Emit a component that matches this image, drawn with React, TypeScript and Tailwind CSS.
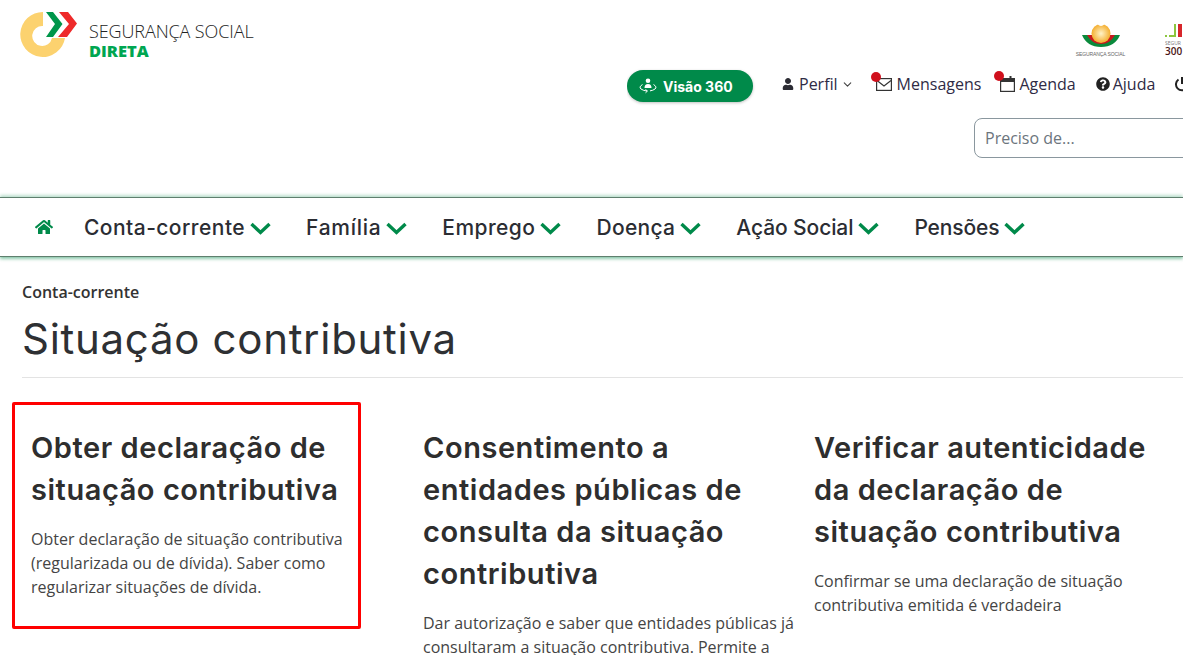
import { ChevronDown } from 'lucide-react'
import { FaUser, FaQuestionCircle, FaHome } from 'react-icons/fa'

const HEADING = "font-['Inter','Noto_Sans',sans-serif]"

const NAV_ITEMS = [
  { label: 'Conta-corrente', tracking: 'tracking-[0.45px]' },
  { label: 'Família', tracking: 'tracking-[0.7px]' },
  { label: 'Emprego', tracking: 'tracking-[0.45px]' },
  { label: 'Doença', tracking: 'tracking-[0.3px]' },
  { label: 'Ação Social', tracking: 'tracking-[-0.1px]' },
  { label: 'Pensões', tracking: 'tracking-[-0.12px]' },
]

function Logo() {
  return (
    <div className="flex items-start">
      <svg width="60" height="48" viewBox="20 10 60 48" className="shrink-0">
        <path d="M43 12 A22.5 22.5 0 1 0 65 38 L52 38 A10 10 0 1 1 43 26 Z" fill="#fcd26f" />
        <path d="M46 12 H53 L62.5 24 L53 37 H46 L55 24 Z" fill="#00964a" />
        <path d="M59 12 H68 L77 23.5 L67 37 H58 L69 24 Z" fill="#ee2a2a" />
      </svg>
      <div className="ml-[9px] mt-[11px] font-['Open_Sans',sans-serif]">
        <div className="text-[18px] leading-[20px] font-light tracking-[-0.1px] text-[#222]">SEGURANÇA SOCIAL</div>
        <div className="text-[16.5px] leading-[20px] font-extrabold text-[#00a651]">DIRETA</div>
      </div>
    </div>
  )
}

function PartnerLogos() {
  return (
    <div className="flex h-[70px] items-start justify-end pt-[24px]">
      <div className="flex w-[47px] shrink-0 flex-col items-center">
        <svg width="38" height="23" viewBox="0 0 38 23">
          <defs>
            <radialGradient id="sun">
              <stop offset="0" stopColor="#fff3c8" />
              <stop offset="1" stopColor="#f4ae2f" />
            </radialGradient>
          </defs>
          <path d="M0 11 H8 Q19 18 30 11 H38 Q33 23 19 23 Q5 23 0 11 Z" fill="#0a8a3c" />
          <path d="M5 11 H33 Q28 20 19 20 Q10 20 5 11 Z" fill="#c8171e" />
          <circle cx="19" cy="9.5" r="9.5" fill="url(#sun)" />
          <path d="M14.5 -1 Q19 5 23.5 -1 Z" fill="#fff" />
        </svg>
        <div className="mt-[4px] whitespace-nowrap font-['Liberation_Sans',sans-serif] text-[5px] leading-[6px] tracking-[-0.1px] text-[#666]">SEGURANÇA SOCIAL</div>
      </div>
      <div className="ml-[41px] w-[18px] shrink-0 overflow-hidden font-['Open_Sans',sans-serif]">
        <svg width="18" height="14" viewBox="0 0 18 14" className="block">
          <path d="M0 11 H2 V13 H0 Z M4 11 H9 V0 H11 V13 H4 Z" fill="#8cc63f" />
          <path d="M13 0 H17 V13 H13 Z" fill="#d7262b" />
        </svg>
        <div className="mt-[2px] whitespace-nowrap text-[5px] leading-[6px] text-[#777]">SEGUR</div>
        <div className="text-[10px] leading-[11px] font-semibold text-[#4a1414]">300</div>
      </div>
    </div>
  )
}

function Visao360Icon() {
  return (
    <svg width="20" height="16" viewBox="0 0 20 16" fill="none" stroke="#fff" strokeWidth="1" className="shrink-0">
      <circle cx="10" cy="2.8" r="2.3" fill="#fff" stroke="none" />
      <path d="M6.5 10 Q6.5 6 10 6 Q13.5 6 13.5 10 Z" fill="#fff" stroke="none" />
      <path d="M4.5 6.5 Q0.5 9 3 11 Q5.5 12.8 9 13" />
      <path d="M7.5 11.5 L9.5 13 L7.5 14.8" />
      <path d="M15.5 6.5 Q19.5 9 17 11 Q15 12.5 12 12.9" />
    </svg>
  )
}

function Badge({ className }: { className: string }) {
  return <span className={`absolute h-[10px] w-[10px] rounded-full bg-[#d0101c] ${className}`} />
}

function TopLinks() {
  return (
    <div className="flex h-[32px] items-center font-['Open_Sans',sans-serif] text-[16px] text-[#2f2b45]">
      <button className="mr-[29px] flex h-[32px] w-[126px] shrink-0 items-center gap-[5px] rounded-[16px] bg-[#008a4a] pl-[11px] font-['Inter',sans-serif] text-[14px] font-bold text-white shadow-[0_1px_3px_rgba(0,0,0,0.25)]">
        <Visao360Icon />
        Visão 360
      </button>
      <div className="-mt-[4px] mr-[22px] flex items-center">
        <FaUser className="mr-[5px] h-[12px] w-[12px] text-[#2b2b33]" />
        Perfil
        <ChevronDown className="ml-[3px] h-[13px] w-[13px] text-[#444]" />
      </div>
      <div className="-mt-[4px] mr-[19px] flex items-center">
        <span className="relative mr-[5px]">
          <svg width="16" height="13" viewBox="0 0 16 13" fill="none" stroke="#333" strokeWidth="1.2" className="block">
            <rect x="0.6" y="0.6" width="14.8" height="11.8" />
            <path d="M1 2.5 L8 8 L15 2.5" />
          </svg>
          <Badge className="-left-[5px] -top-[6px]" />
        </span>
        Mensagens
      </div>
      <div className="-mt-[4px] mr-[20px] flex items-center">
        <span className="relative mr-[4px]">
          <svg width="15" height="16" viewBox="0 0 15 16" fill="none" stroke="#333" strokeWidth="1.2" className="block">
            <rect x="0.6" y="2.6" width="13.8" height="12.8" />
            <path d="M0.6 4.5 H14.4" strokeWidth="3" />
            <path d="M10.5 0 V4" strokeWidth="2" />
          </svg>
          <Badge className="-left-[6px] -top-[5px]" />
        </span>
        Agenda
      </div>
      <div className="-mt-[4px] mr-[19px] flex items-center">
        <FaQuestionCircle className="mr-[3px] h-[14px] w-[14px] text-[#222]" />
        Ajuda
      </div>
      <svg width="16" height="16" viewBox="0 0 16 16" fill="none" stroke="#222" strokeWidth="2" className="-mt-[4px] shrink-0">
        <path d="M4.5 3.5 A6 6 0 1 0 11.5 3.5" />
        <path d="M8 1 V8" />
      </svg>
    </div>
  )
}

function Header() {
  return (
    <header className="flex h-[197px] justify-between pl-[20px] pt-[10px]">
      <Logo />
      <div className="-mt-[10px] w-[556px] shrink-0 overflow-hidden">
        <PartnerLogos />
        <TopLinks />
        <div className="ml-[347px] mt-[16px] flex h-[40px] w-[300px] items-center rounded-[8px] border border-[#8a979e] px-[10px] font-['Open_Sans',sans-serif] text-[16px] text-[#6c757d]">
          Preciso de...
        </div>
      </div>
    </header>
  )
}

function NavChevron() {
  return (
    <svg width="21" height="13" viewBox="0 0 21 13" fill="none" stroke="#008a4a" strokeWidth="3.4" className="ml-[5px] mt-[1px] shrink-0">
      <path d="M1.5 2 L10.5 10.5 L19.5 2" />
    </svg>
  )
}

function MainNav() {
  return (
    <nav className={`flex h-[60px] items-center gap-[35px] border-y border-[#5f7f6e] bg-white pl-[35px] pt-[2px] shadow-[0_-2px_3px_rgba(0,138,74,0.25),0_2px_3px_rgba(0,138,74,0.45)] ${HEADING}`}>
      <FaHome className="-mr-[4px] -mt-[2px] h-[18px] w-[18px] text-[#008a4a]" />
      {NAV_ITEMS.map((item) => (
        <div key={item.label} className={`flex items-center whitespace-nowrap text-[21px] font-medium text-[#2b2d33] ${item.tracking}`}>
          {item.label}
          <NavChevron />
        </div>
      ))}
    </nav>
  )
}

function Card({ title, text, className }: { title: string[]; text: string[]; className?: string }) {
  return (
    <div className={`shrink-0 ${className}`}>
      <h2 className={`text-[29px] leading-[42px] font-semibold tracking-[0.55px] text-[#2e2e2e] ${HEADING}`}>
        {title.map((line) => (
          <div key={line} className="whitespace-nowrap">{line}</div>
        ))}
      </h2>
      <p className="mt-[16px] font-['Open_Sans',sans-serif] text-[16px] leading-[24px] text-[#444]">
        {text.map((line) => (
          <span key={line} className="block whitespace-nowrap">{line}</span>
        ))}
      </p>
    </div>
  )
}

export default function App() {
  return (
    <div className="h-[655px] w-[1183px] overflow-hidden bg-white">
      <Header />
      <MainNav />
      <main className="pl-[22px] pt-[25px]">
        <div className="font-['Open_Sans',sans-serif] text-[16px] leading-[20px] font-semibold text-[#333]">Conta-corrente</div>
        <h1 className={`mt-[13px] pb-[14px] text-[42px] leading-[48px] tracking-[0.7px] text-[#2e3033] ${HEADING}`}>Situação contributiva</h1>
        <div className="h-px bg-[#e3e3e3]" />
        <div className="mt-[24px] flex">
          <Card
            className="-ml-[10px] h-[227px] w-[349px] rounded-[2px] border-[3px] border-[#ff0000] pl-[16px] pt-[22px]"
            title={['Obter declaração de', 'situação contributiva']}
            text={['Obter declaração de situação contributiva', '(regularizada ou de dívida). Saber como', 'regularizar situações de dívida.']}
          />
          <Card
            className="ml-[62px] w-[391px] pt-[25px]"
            title={['Consentimento a', 'entidades públicas de', 'consulta da situação', 'contributiva']}
            text={['Dar autorização e saber que entidades públicas já', 'consultaram a situação contributiva. Permite a']}
          />
          <Card
            className="w-[360px] pt-[25px]"
            title={['Verificar autenticidade', 'da declaração de', 'situação contributiva']}
            text={['Confirmar se uma declaração de situação', 'contributiva emitida é verdadeira']}
          />
        </div>
      </main>
    </div>
  )
}
